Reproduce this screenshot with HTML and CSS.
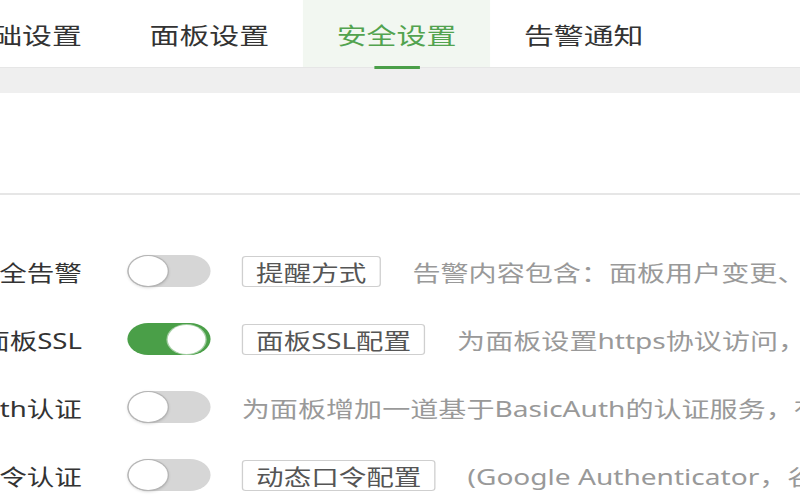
FILE: index.html
```html
<!DOCTYPE html>
<html lang="zh-CN">
<head>
<meta charset="utf-8">
<title>安全设置</title>
<link rel="stylesheet" href="styles.css">
</head>
<body>
<div class="page">
  <div class="tabbar">
    <div class="tabs">
      <div class="tab">基础设置</div>
      <div class="tab">面板设置</div>
      <div class="tab active">安全设置</div>
      <div class="tab">告警通知</div>
    </div>
  </div>
  <div class="gap"></div>
  <div class="card">
    <div class="card-head"></div>
    <div class="rows">
      <div class="row">
        <div class="label">安全告警</div>
        <div class="toggle"><span class="knob"></span></div>
        <div class="btn">提醒方式</div>
        <div class="desc">告警内容包含：面板用户变更、面板日志删除、面板开启开发者模式</div>
      </div>
      <div class="row">
        <div class="label">面板SSL</div>
        <div class="toggle on"><span class="knob"></span></div>
        <div class="btn">面板SSL配置</div>
        <div class="desc">为面板设置https协议访问，提高面板访问安全性</div>
      </div>
      <div class="row">
        <div class="label">BasicAuth认证</div>
        <div class="toggle"><span class="knob"></span></div>
        <div class="desc">为面板增加一道基于BasicAuth的认证服务，有效防止面板被扫描发现</div>
      </div>
      <div class="row">
        <div class="label">动态口令认证</div>
        <div class="toggle"><span class="knob"></span></div>
        <div class="btn">动态口令配置</div>
        <div class="desc">(Google Authenticator，谷歌身份验证器)</div>
      </div>
    </div>
  </div>
</div>
</body>
</html>
```
FILE: styles.css
```css
html, body {
  margin: 0;
  padding: 0;
  overflow: hidden;
  background: #fff;
}

.page {
  width: 616px;
  transform: scaleX(1.3);
  transform-origin: 0 0;
  font-family: "Noto Sans", "Noto Sans CJK SC", sans-serif;
}

.tabbar {
  height: 67px;
  border-bottom: 1px solid #e6e6e6;
  background: #fff;
}

.tabs {
  display: flex;
  height: 67px;
  margin-left: -55px;
}

.tab {
  width: 144px;
  flex: none;
  display: flex;
  align-items: center;
  justify-content: center;
  font-size: 23px;
  color: #333;
  position: relative;
}

.tab.active {
  background: #f2f7f1;
  color: #52a34f;
}

.tab.active::after {
  content: "";
  position: absolute;
  left: 50%;
  bottom: -2px;
  width: 35px;
  height: 3px;
  margin-left: -17.5px;
  background: #4a9f48;
}

.gap {
  height: 25px;
  background: #efefef;
}

.card-head {
  height: 100px;
  border-bottom: 2px solid #e6e6e6;
}

.rows {
  padding-top: 42px;
  margin-left: -97px;
}

.row {
  display: flex;
  align-items: center;
  height: 68px;
  gap: 24.5px;
  white-space: nowrap;
  font-size: 21.2px;
}

.label {
  width: 160px;
  flex: none;
  display: flex;
  justify-content: flex-end;
  margin-right: 10px;
  color: #333;
}

.toggle {
  width: 64px;
  height: 32px;
  flex: none;
  box-sizing: border-box;
  border-radius: 16px;
  background: #d6d6d6;
  display: flex;
  align-items: center;
  padding: 0 1px;
}

.knob {
  width: 30px;
  height: 30px;
  border-radius: 50%;
  background: #fff;
  box-shadow: 0 0 0 1px #b5b5b5, 0 1px 3px rgba(0, 0, 0, 0.3);
}

.toggle.on {
  background: #4a9f48;
  justify-content: flex-end;
  padding-right: 4px;
}

.toggle.on .knob {
  width: 29px;
  height: 29px;
  box-shadow: 0 0 0 1px rgba(255, 255, 255, 0.5);
}

.btn {
  flex: none;
  height: 31px;
  box-sizing: border-box;
  padding: 0 10px;
  border: 1px solid #cfcfcf;
  border-radius: 3px;
  background: #fff;
  color: #555;
  display: flex;
  align-items: center;
}

.desc {
  color: #999;
  font-size: 21.6px;
}
```
